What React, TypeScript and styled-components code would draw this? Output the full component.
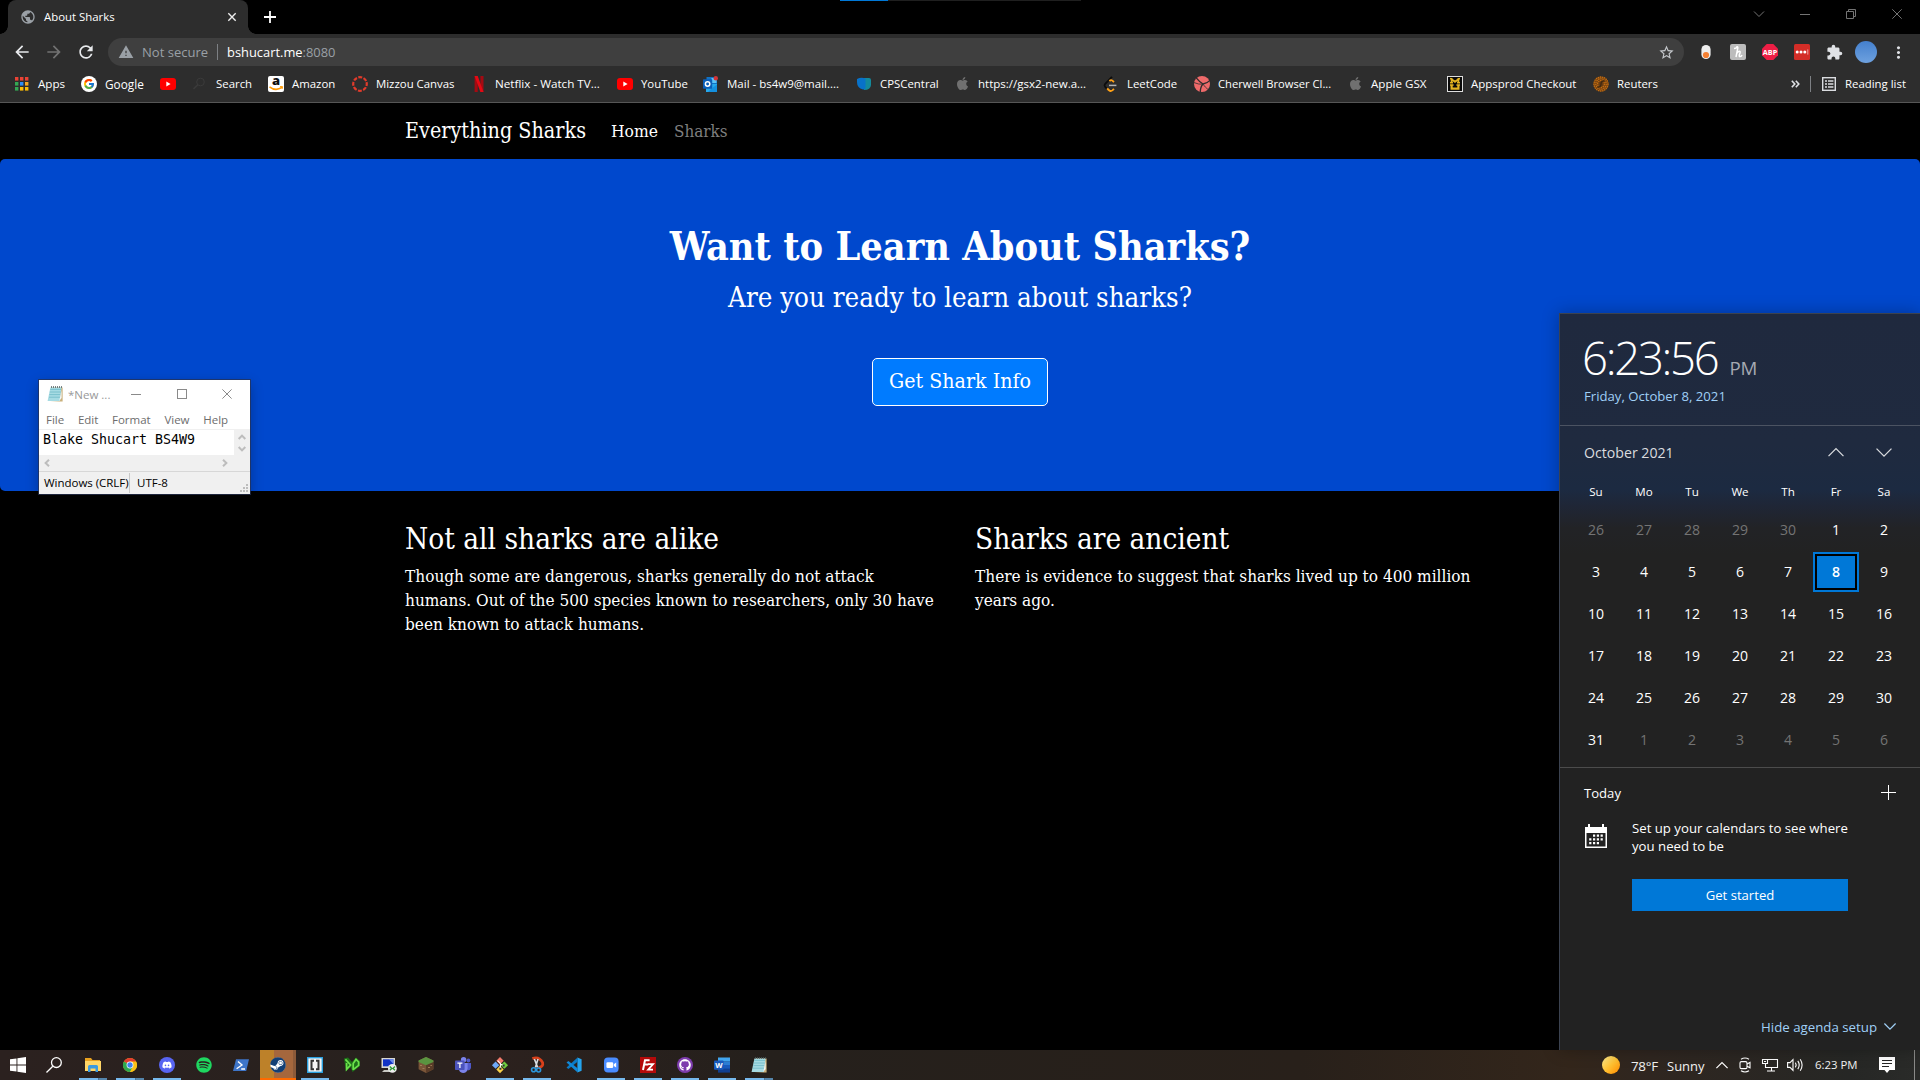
import React from "react";
import styled, { createGlobalStyle, css } from "styled-components";
import { FcGoogle } from "react-icons/fc";
import { FaApple, FaDiscord, FaSpotify, FaSteam, FaGithub } from "react-icons/fa";
import { MdExtension, MdStarBorder, MdArrowBack, MdArrowForward, MdRefresh, MdWarning, MdPublic, MdMoreVert } from "react-icons/md";

const SANS = `"Open Sans", "Noto Sans", sans-serif`;
const SERIF = `"DejaVu Serif Condensed", "DejaVu Serif", serif`;

const GlobalStyle = createGlobalStyle`
  *, *::before, *::after { box-sizing: border-box; }
  body { margin: 0; background: #000; overflow: hidden; }
  svg { display: block; flex: none; overflow: visible; }
  h1, h2, p { margin: 0; }
`;

const Screen = styled.div`
  position: relative;
  display: flex;
  flex-direction: column;
  width: 1920px;
  height: 1080px;
  overflow: hidden;
  background: #000;
  color: #fff;
  font-family: ${SANS};
`;

/* ---------- browser chrome ---------- */

const TabStrip = styled.div`
  display: flex;
  height: 34px;
  padding-left: 8px;
`;

const Tab = styled.div`
  position: relative;
  display: flex;
  align-items: center;
  width: 240px;
  padding: 0 12px 1px 12px;
  border-radius: 8px 8px 0 0;
  background: #2d2d2d;
  font-size: 11.4px;

  &::before,
  &::after {
    content: "";
    position: absolute;
    bottom: 0;
    width: 8px;
    height: 8px;
  }
  &::before {
    left: -8px;
    background: radial-gradient(circle at 0 0, transparent 7.5px, #2d2d2d 8px);
  }
  &::after {
    right: -8px;
    background: radial-gradient(circle at 100% 0, transparent 7.5px, #2d2d2d 8px);
  }
`;

const TabTitle = styled.span`
  flex: 1;
  margin-left: 8px;
`;

const NewTab = styled.div`
  display: flex;
  align-items: center;
  padding-left: 16px;
`;

const WindowButtons = styled.div`
  display: flex;
  gap: 30px;
  align-items: center;
  height: 28px;
  margin-left: auto;
  padding-right: 15px;
`;

const LoadingTrack = styled.div`
  position: absolute;
  top: 0;
  left: 840px;
  width: 241px;
  height: 1px;
  background: linear-gradient(90deg, #0078d7 48px, #1f1f1f 48px);
`;

const Toolbar = styled.div`
  display: flex;
  align-items: center;
  height: 36px;
  padding: 0 12px 0 12px;
  background: #2d2d2d;
`;

const NavButtons = styled.div`
  display: flex;
  gap: 12px;
  width: 96px;
  color: #e8eaed;
`;

const Omnibox = styled.div`
  display: flex;
  align-items: center;
  width: 1576px;
  height: 28px;
  padding: 0 9px 0 10px;
  border-radius: 14px;
  background: #3f3f3f;
  color: #9aa0a6;
  font-size: 13.05px;
`;

const Security = styled.span`
  width: 75px;
  margin-left: 8px;
`;

const Address = styled.span`
  flex: 1;
  margin-left: 9px;
  font-size: 12.9px;

  b {
    color: #fff;
    font-weight: 400;
  }
`;

const Divider = styled.span`
  width: 1px;
  height: 16px;
  background: #7d8084;
`;

const Extensions = styled.div`
  display: flex;
  flex: 1;
  align-items: center;
  justify-content: space-between;
  padding-left: 14px;
`;

const Avatar = styled.div`
  width: 22px;
  height: 22px;
  margin: 0 -4px;
  border-radius: 50%;
  background: linear-gradient(#4480ce, #6ea1df);
`;

const Bookmarks = styled.div`
  display: flex;
  align-items: center;
  height: 33px;
  padding: 0 14px 5px;
  border-bottom: 1px solid #565656;
  background: #2d2d2d;
  font-size: 11.4px;
`;

const Bookmark = styled.div<{ $w: number }>`
  display: flex;
  flex: none;
  gap: 8px;
  align-items: center;
  width: ${(p) => p.$w}px;
  white-space: nowrap;
`;

const BookmarkLabel = styled.span<{ $size?: number }>`
  font-size: ${(p) => p.$size ?? 11.4}px;
`;

const BookmarksEnd = styled.div`
  display: flex;
  align-items: center;
  gap: 9px;
  margin-left: auto;
`;

const OverflowMark = styled.svg`
  margin-right: 1px;
`;

const ReadingGlyph = styled.svg`
  margin-left: 2px;
`;

/* ---------- page ---------- */

const Page = styled.main`
  flex: 1;
  font-family: ${SERIF};
`;

const Container = styled.div`
  width: 1140px;
  margin: 0 auto;
  padding: 0 15px;
`;

const PageNav = styled(Container)`
  display: flex;
  align-items: center;
  height: 56px;
  padding-bottom: 2px;
`;

const Brand = styled.span`
  width: 206px;
  font-size: 21.36px;
`;

const NavLink = styled.span<{ $active?: boolean }>`
  margin-right: 16px;
  padding-top: 1px;
  color: ${(p) => (p.$active ? "#fff" : "#7f7f7f")};
  font-size: ${(p) => (p.$active ? 17.33 : 16.9)}px;
`;

const Jumbotron = styled.section`
  display: flex;
  flex-direction: column;
  align-items: center;
  height: 332px;
  padding-top: 63px;
  border-radius: 5px;
  background: #0048cd;
`;

const Headline = styled.h1`
  margin-bottom: 8px;
  font-size: 39.3px;
  line-height: 48px;
`;

const Tagline = styled.p`
  margin-bottom: 41px;
  font-size: 27.46px;
  line-height: 39px;
`;

const PrimaryButton = styled.button`
  width: 176px;
  height: 48px;
  padding: 0 0 4px;
  border: 1px solid #fff;
  border-radius: 5px;
  background: #007bff;
  color: #fff;
  font: 21.19px ${SERIF};
`;

const Columns = styled(Container)`
  display: grid;
  grid-template-columns: 540px 540px;
  column-gap: 30px;
  padding-top: 30px;
`;

const ColumnTitle = styled.h2`
  margin-bottom: 7px;
  font-weight: 400;
  font-size: 29.5px;
  line-height: 36px;
`;

const Paragraph = styled.p`
  font-size: 17.08px;
  line-height: 24px;
`;

/* ---------- notepad window ---------- */

const Notepad = styled.div`
  position: absolute;
  top: 380px;
  left: 39px;
  display: flex;
  flex-direction: column;
  width: 211px;
  height: 114px;
  background: #f0f0f0;
  color: #000;
  box-shadow: 0 0 0 1px rgba(40, 50, 80, 0.75), 0 4px 12px rgba(0, 0, 0, 0.3);
`;

const NotepadTitle = styled.div`
  display: flex;
  align-items: center;
  height: 30px;
  padding: 0 18px 2px 8px;
  background: #fff;
  color: #999;
  font-size: 11.5px;
`;

const NotepadName = styled.span`
  width: 63px;
  margin-left: 5px;
`;

const NotepadControls = styled.div`
  display: flex;
  flex: 1;
  justify-content: space-between;
`;

const NotepadMenu = styled.div`
  display: flex;
  gap: 13.7px;
  align-items: center;
  height: 19px;
  padding: 0 0 1px 7px;
  background: #fff;
  color: #6d6d6d;
  font-size: 11.5px;
`;

const NotepadEditor = styled.div`
  display: flex;
  height: 26px;
`;

const NotepadText = styled.div`
  width: 195px;
  margin-top: 1px;
  padding: 1px 0 0 4px;
  background: #fff;
  font: 13.29px/18px "DejaVu Sans Mono", "Liberation Mono", monospace;
  white-space: nowrap;
`;

const VerticalScroll = styled.div`
  display: flex;
  flex: 1;
  flex-direction: column;
  gap: 6px;
  align-items: center;
  padding-top: 5px;
`;

const HorizontalScroll = styled.div`
  display: flex;
  align-items: center;
  justify-content: space-between;
  height: 16px;
  padding: 0 22px 0 5px;
`;

const StatusBar = styled.div`
  display: flex;
  flex: 1;
  align-items: center;
  padding-left: 5px;
  border-top: 1px solid #d7d7d7;
  font-size: 11.5px;
  line-height: 20px;
`;

const Encoding = styled.span`
  width: 86px;
  border-right: 1px solid #c8c8c8;
  letter-spacing: -0.03px;
  white-space: nowrap;
`;

const Charset = styled.span`
  flex: 1;
  padding-left: 7px;
`;

const Grip = styled.svg`
  align-self: flex-end;
  margin: 0 2px 2px 0;
`;

/* ---------- clock flyout ---------- */

const Flyout = styled.aside`
  position: absolute;
  top: 313px;
  right: 0;
  display: flex;
  flex-direction: column;
  width: 361px;
  height: 737px;
  border: solid #3b4250;
  border-width: 1px 0 0 1px;
  background: linear-gradient(#1f293e 0, #1f2a3f 130px, #1c2a41 176px, #1f2636 192px, #222326 214px, #222 240px);
  box-shadow: 0 0 16px rgba(0, 0, 0, 0.28);
`;

const ClockBlock = styled.div`
  height: 112px;
  padding: 15px 0 0 24px;
  border-bottom: 1px solid #4b5362;
`;

const Time = styled.div`
  display: flex;
  gap: 12px;
  align-items: baseline;
  height: 58px;
  margin-left: -2px;
  font-weight: 300;
  font-size: 45.5px;
  letter-spacing: -2.3px;
  line-height: 56px;
`;

const Meridiem = styled.span`
  color: #a5a9b2;
  font-weight: 400;
  font-size: 18.7px;
  letter-spacing: -0.3px;
  line-height: 24px;
`;

const DateLine = styled.div`
  color: #a0d0f7;
  font-size: 13.15px;
  line-height: 18px;
`;

const MonthBar = styled.div`
  display: flex;
  gap: 32px;
  align-items: center;
  height: 53px;
  padding: 0 28px 1px 24px;
  color: #dadcdf;
  font-size: 14.15px;
`;

const MonthName = styled.span`
  flex: 1;
`;

const DayGrid = styled.div`
  display: grid;
  grid-template-columns: repeat(7, 48px);
  grid-auto-rows: 42px;
  height: 259px;
  padding-left: 12px;
`;

const WeekRow = styled(DayGrid)`
  height: 29px;
  grid-auto-rows: 25px;
`;

const WeekDay = styled.span`
  display: flex;
  align-items: center;
  justify-content: center;
  font-size: 11.6px;
`;

const Day = styled.span<{ $muted?: boolean; $today?: boolean }>`
  display: flex;
  align-items: center;
  justify-content: center;
  color: ${(p) => (p.$muted ? "#747474" : "#fff")};
  font-size: 14.05px;
  ${(p) =>
    p.$today &&
    css`
      align-self: center;
      justify-self: center;
      width: 46px;
      height: 40px;
      margin-top: 2px;
      padding-bottom: 1px;
      border: 2px solid #0078d7;
      background: #0078d7;
      box-shadow: inset 0 0 0 2px #000;
      font-weight: 600;
    `}
`;

const Agenda = styled.div`
  display: flex;
  flex: 1;
  flex-direction: column;
  border-top: 1px solid #4c4c4c;
`;

const AgendaHeader = styled.div`
  display: flex;
  align-items: center;
  justify-content: space-between;
  height: 49px;
  padding: 0 24px 0 24px;
  font-size: 13.1px;
`;

const AgendaBody = styled.div`
  display: flex;
  gap: 25px;
  padding: 2px 0 0 25px;
  font-size: 13.2px;
  line-height: 18px;
`;

const AgendaColumn = styled.div`
  display: flex;
  flex-direction: column;
  gap: 24px;
  width: 216px;
`;

const GetStarted = styled.button`
  height: 32px;
  padding: 0;
  border: 0;
  background: #0078d7;
  color: #fff;
  font: 13.1px ${SANS};
`;

const HideAgenda = styled.div`
  display: flex;
  gap: 7px;
  align-items: center;
  justify-content: flex-end;
  height: 46px;
  margin-top: auto;
  padding: 0 24px 1px 0;
  color: #a0d0f7;
  font-size: 13.27px;
`;

/* ---------- taskbar ---------- */

const Taskbar = styled.footer`
  display: flex;
  height: 30px;
  background: linear-gradient(90deg, #2b211f 0, #28211e 400px, #2c211e 480px, #25201c 760px, #28201a 1300px, #33261b 1570px, #2f2620 1650px, #262725 1850px, #2a2b29);
`;

const StartArea = styled.div`
  display: flex;
  align-items: center;
  gap: 20px;
  width: 75px;
  padding-left: 10px;
`;

const TaskItem = styled.div<{ $state?: "open" | "stack" | "alert" }>`
  position: relative;
  display: flex;
  align-items: center;
  justify-content: center;
  width: 36px;
  margin-right: 1px;

  ${(p) =>
    p.$state === "alert" &&
    css`
      background: linear-gradient(90deg, #bd8129 14px, #a5673d 14px, #a5673d 33px, #8c5a39 33px);
    `}

  &::after {
    content: "";
    position: absolute;
    right: ${(p) => (p.$state === "alert" ? 0 : 4)}px;
    bottom: 0;
    left: ${(p) => (p.$state === "alert" ? 0 : 4)}px;
    height: 2px;
    background: ${(p) =>
      p.$state === "alert"
        ? "#ff6a00"
        : p.$state === "stack"
          ? "linear-gradient(90deg, #76b9ed 19px, #40607a 19px, #5585ab 20px)"
          : p.$state === "open"
            ? "#76b9ed"
            : "transparent"};
  }
`;

const Tray = styled.div`
  display: flex;
  align-items: center;
  width: 318px;
  margin-left: auto;
  color: #f2f2f2;
  font-size: 13px;
`;

const Sun = styled.span`
  width: 18px;
  height: 18px;
  margin-right: 11px;
  border-radius: 50%;
  background: linear-gradient(135deg, #ffe680 10%, #ffc233 50%, #ff8c00 95%);
`;

const Temperature = styled.span`
  width: 36px;
  padding-top: 1px;
  font-size: 13.4px;
  letter-spacing: -0.3px;
`;

const Weather = styled.span`
  width: 49px;
  padding-top: 1px;
`;

const TrayIcons = styled.div`
  display: flex;
  align-items: center;
  gap: 9px;
  width: 99px;
`;

const TrayClock = styled.span`
  width: 63px;
  padding-bottom: 1px;
  font-size: 11.37px;
`;

const TrayActions = styled.svg`
  margin-left: 1px;
`;

const ShowDesktop = styled.span`
  width: 1px;
  height: 30px;
  margin-left: 19px;
  background: #8a8a88;
`;

/* ---------- shared line icons ---------- */

const LINES: Record<string, string> = {
  up: "M0.5 7.5 L7.5 0.5 L14.5 7.5",
  down: "M0.5 0.5 L7.5 7.5 L14.5 0.5",
};

const Chevron = ({ dir, w = 16, color = "currentColor" }: { dir: "up" | "down"; w?: number; color?: string }) => (
  <svg width={w} height={w * 0.55} viewBox="0 0 15 8" fill="none" stroke={color} strokeWidth={w < 13 ? 1.5 : 1.2}>
    <path d={LINES[dir]} />
  </svg>
);

const ScrollArrow = ({ d, w, h }: { d: string; w: number; h: number }) => (
  <svg width={w} height={h} viewBox={`0 0 ${w} ${h}`} fill="none" stroke="#bdbdbd" strokeWidth="2">
    <path d={d} />
  </svg>
);

const Cross = ({ s, color, width = 1 }: { s: number; color: string; width?: number }) => (
  <svg width={s} height={s} viewBox="0 0 10 10" stroke={color} strokeWidth={width}>
    <path d="M0.4 0.4 L9.6 9.6 M9.6 0.4 L0.4 9.6" />
  </svg>
);

const Svg16 = ({ children }: { children: React.ReactNode }) => (
  <svg width="16" height="16" viewBox="0 0 16 16">
    {children}
  </svg>
);

/* ---------- bookmark icons ---------- */

const AppsIcon = () => {
  const colors = ["#ea4335", "#ea4335", "#ea4335", "#34a853", "#2f8df5", "#f6a623", "#34a853", "#fbbc05", "#fbbc05"];
  return (
    <Svg16>
      {colors.map((c, i) => (
        <rect key={i} x={1 + (i % 3) * 5} y={1 + Math.floor(i / 3) * 5} width="3.4" height="3.6" fill={c} />
      ))}
    </Svg16>
  );
};

const GoogleIcon = () => (
  <svg width="16" height="16" viewBox="0 0 16 16">
    <circle cx="8" cy="8" r="8" fill="#fff" />
    <FcGoogle x="2" y="2" size={12} />
  </svg>
);

const YouTubeIcon = () => (
  <Svg16>
    <rect x="0" y="2" width="16" height="12" rx="3" fill="#f00" />
    <path d="M6.3 5.4 L10.6 8 L6.3 10.6Z" fill="#fff" />
  </Svg16>
);

const SearchFavicon = () => (
  <Svg16>
    <g fill="none" stroke="#3b3b3b" strokeWidth="1">
      <circle cx="8.5" cy="6" r="3.8" />
      <path d="M5.8 8.8 L1.5 13" strokeWidth="1.6" />
    </g>
  </Svg16>
);

const AmazonIcon = () => (
  <Svg16>
    <rect width="16" height="16" rx="2" fill="#fff" />
    <text x="8" y="9.4" textAnchor="middle" fontFamily="Open Sans" fontWeight="800" fontSize="13" fill="#111">a</text>
    <path d="M1.5 10.8 Q7.5 15.6 14 11.4" fill="none" stroke="#f90" strokeWidth="1.5" />
    <path d="M12 10.6 H14.6 L14 13" fill="none" stroke="#f90" />
  </Svg16>
);

const CanvasIcon = () => (
  <Svg16>
    <circle cx="8" cy="8" r="6.8" fill="none" stroke="#e13b2b" strokeWidth="2.2" strokeDasharray="3.9 1.44" transform="rotate(-16 8 8)" />
  </Svg16>
);

const NetflixIcon = () => (
  <Svg16>
    <path d="M3.6 0H6.7V16H3.6Z M9.4 0H12.5V16H9.4Z" fill="#a50a12" />
    <path d="M3.6 0H6.7L12.5 16H9.4Z" fill="#e50914" />
  </Svg16>
);

const OutlookIcon = () => (
  <Svg16>
    <rect x="3.5" y="1" width="10.5" height="10" fill="#1272c4" />
    <rect x="8.5" y="2" width="5" height="5" fill="#5bc3f7" />
    <path d="M3 8 H14 V16 H3Z" fill="#28a8ea" />
    <path d="M8 13 L14 8.5 V16 H5Z" fill="#1490df" />
    <rect y="3.3" width="9.2" height="9.4" rx="0.6" fill="#0a5eb8" />
    <circle cx="4.6" cy="8" r="2.2" fill="none" stroke="#fff" strokeWidth="1.5" />
    <circle cx="12.8" cy="2.2" r="2.2" fill="#d13438" />
  </Svg16>
);

const ShieldIcon = () => (
  <Svg16>
    <path d="M8 2 H13 Q15 2 15 4 V9 Q14.6 14 8 14Z" fill="#138a9c" />
    <path d="M1 3 Q5 0.8 9.5 2.5 V12 Q8.6 13.8 7 13.6 Q1 12 1 6Z" fill="#0872c9" />
  </Svg16>
);

const LeetCodeIcon = () => (
  <Svg16>
    <g fill="none" strokeWidth="1.8">
      <path d="M9 0.8 L2 8 Q1 9.2 2 10.6 L4 12.8" stroke="#0c0c0c" />
      <path d="M6.4 5 Q8 3.4 9.4 4.6 L11 6.2 M4.2 12.4 Q7 16.2 9.4 14.4 L11 12.8" stroke="#ffa116" />
      <path d="M6 9.4 H13.4" stroke="#b3b3b3" strokeWidth="1.5" />
    </g>
  </Svg16>
);

const CherwellIcon = () => (
  <Svg16>
    <circle cx="8" cy="8" r="8" fill="#ee6a6a" />
    <g fill="none" stroke="#2d2d2d" strokeWidth="1.3">
      <path d="M2 1.6 Q5.4 5.8 9 8 Q13.4 7.2 16 4.4 M9 8 Q6.2 11 6.3 16.4" />
      <path d="M0 6.6 Q5 8.6 8.5 8.2 M8.8 8 Q11.4 11.5 14 13.5" strokeWidth="0.8" />
    </g>
  </Svg16>
);

const MizzouIcon = () => (
  <Svg16>
    <rect x="0.5" y="0.5" width="15" height="15" fill="#0a0a0a" stroke="#ddd" />
    <g fill="none" stroke="#e3b321">
      <path d="M4.6 7 V3.2 L8 5.8 L11.4 3.2 V7" strokeWidth="1.8" />
      <path d="M3 2.8H5.4M10.6 2.8H13M3 6.8H6M10 6.8H13" strokeWidth="1.4" />
      <path d="M4.6 9 V12.6 H11.4 V9" strokeWidth="2.2" />
      <path d="M3 9H6.6M9.4 9H13" strokeWidth="1.4" />
    </g>
  </Svg16>
);

const ReutersIcon = () => (
  <Svg16>
    <circle cx="8" cy="8" r="7.6" fill="#6b3d12" />
    {[7, 5.2, 3.4].map((r) => (
      <circle key={r} cx="8" cy="8" r={r} fill="none" stroke="#c46e12" strokeWidth="1.3" strokeDasharray="1.4 0.7" />
    ))}
    <path d="M4.4 11 Q8 11.4 8 8 T11.8 4.8" fill="none" stroke="#3d2812" strokeWidth="1.3" />
  </Svg16>
);

const AppleIcon = () => <FaApple size={15} color="#707070" />;

const BOOKMARKS: [string, number, React.ReactNode, number?][] = [
  ["Apps", 67, <AppsIcon />, 11.6],
  ["Google", 79, <GoogleIcon />, 11.8],
  ["", 32, <YouTubeIcon />],
  ["Search", 76, <SearchFavicon />],
  ["Amazon", 84, <AmazonIcon />],
  ["Mizzou Canvas", 119, <CanvasIcon />],
  ["Netflix - Watch TV...", 146, <NetflixIcon />, 11.67],
  ["YouTube", 86, <YouTubeIcon />],
  ["Mail - bs4w9@mail....", 153, <OutlookIcon />, 11.5],
  ["CPSCentral", 99, <ShieldIcon />],
  ["https://gsx2-new.a...", 148, <AppleIcon />, 11.5],
  ["LeetCode", 91, <LeetCodeIcon />],
  ["Cherwell Browser Cl...", 154, <CherwellIcon />, 11.2],
  ["Apple GSX", 99, <AppleIcon />, 11.6],
  ["Appsprod Checkout", 146, <MizzouIcon />, 11.46],
  ["Reuters", 70, <ReutersIcon />],
];

/* ---------- extension icons ---------- */

const CapsuleIcon = () => (
  <Svg16>
    <rect x="3.4" y="1" width="9.2" height="14" rx="4.6" fill="#eee" />
    <circle cx="8" cy="11" r="3.1" fill="#f58033" />
  </Svg16>
);

const HoneyIcon = () => (
  <Svg16>
    <rect width="16" height="16" rx="2" fill="#bcbcbc" />
    <path d="M4 4.6 Q6.5 4.6 7 2.8 Q8.2 2.6 7.6 5 L6 13 M6.6 9.6 Q8.6 6.6 9.8 7.4 Q10.6 8 9.4 10.6 Q8.8 12.8 10.2 12.6 Q11.4 12.4 12 11" fill="none" stroke="#fff" strokeWidth="1.5" />
  </Svg16>
);

const AdblockIcon = () => (
  <Svg16>
    <path d="M4.7 0H11.3L16 4.7V11.3L11.3 16H4.7L0 11.3V4.7Z" fill="#ed1e45" />
    <text x="8" y="10.8" textAnchor="middle" fontFamily="Open Sans" fontWeight="700" fontSize="7.8" fill="#fff" textLength="14.4" lengthAdjust="spacingAndGlyphs">ABP</text>
  </Svg16>
);

const LastPassIcon = () => (
  <Svg16>
    <rect width="16" height="16" rx="1.5" fill="#d32d27" />
    <circle cx="3.2" cy="8" r="1.5" fill="#fff" />
    <circle cx="7" cy="8" r="1.5" fill="#fff" />
    <circle cx="10.8" cy="8" r="1.5" fill="#fff" />
    <path d="M13.8 5.4V10.6" stroke="#f2a19e" />
  </Svg16>
);

/* ---------- taskbar icons ---------- */

const FolderIcon = () => (
  <Svg16>
    <path d="M0 1H6L7.5 3H15V8H0Z" fill="#e9a21f" />
    <rect y="4" width="16" height="10" fill="#ffd667" />
    <path d="M3 15V9.5Q3 8 4.5 8H11.5Q13 8 13 9.5V15H10.5V11.5H5.5V15Z" fill="#3b9ae0" />
  </Svg16>
);

const ChromeIcon = () => (
  <Svg16>
    <circle cx="8" cy="8" r="7" fill="#fbc116" />
    <path d="M8 8 L1.9 4.5 A7 7 0 0 1 14.1 4.5Z" fill="#e33b2e" />
    <path d="M8 8 L1.9 4.5 A7 7 0 0 0 8 15 L11 9.7Z" fill="#2da94f" />
    <path d="M8 4.5 H14.1 A7 7 0 0 1 8 15 L11 9.5Z" fill="#fbc116" />
    <circle cx="8" cy="8" r="3.4" fill="#fff" />
    <circle cx="8" cy="8" r="2.7" fill="#3f83ee" />
  </Svg16>
);

const DiscordIcon = () => (
  <svg width="16" height="16" viewBox="0 0 16 16">
    <circle cx="8" cy="8" r="8" fill="#5865f2" />
    <FaDiscord x="3" y="3" size={10} color="#fff" />
  </svg>
);

const PowerShellIcon = () => (
  <Svg16>
    <path d="M3 2.2H16L13.2 14H0Z" fill="#3e75c8" />
    <path d="M5 4.4 L9 8 L3.6 11.8 M8.2 12H12" fill="none" stroke="#fff" strokeWidth="1.4" />
  </Svg16>
);

const SteamIcon = () => (
  <svg width="16" height="16" viewBox="0 0 16 16">
    <circle cx="8" cy="8" r="7.6" fill="#fff" />
    <FaSteam size={16} color="#123f75" />
  </svg>
);

const BracketsIcon = () => (
  <Svg16>
    <rect width="16" height="16" fill="#2aa0df" />
    <rect x="1.4" y="1.4" width="13.2" height="13.2" fill="#f5f5f5" />
    <path d="M7 3.8H4.5V12.2H7M9 3.8H11.5V12.2H9" fill="none" stroke="#333" strokeWidth="2" />
  </Svg16>
);

const GreenArrowIcon = () => (
  <Svg16>
    <path d="M0 1.4 L4 0.6 L8 5 L12 0.4 L16 4 V9 L8.6 15 L6.4 10 L2 14.6 Z" fill="#1d6f19" />
    <g fill="none" stroke="#6be04b" strokeWidth="1.7">
      <path d="M1.4 2.4 L6.6 8 L2.6 12.4 V6" />
      <path d="M9.2 13 V6.4 L12 2.4 L14.6 5 V8.4 L9.2 12.6" />
    </g>
  </Svg16>
);

const RemotePcIcon = () => (
  <Svg16>
    <rect x="0.5" y="1" width="13.5" height="10" fill="#d7d7d2" />
    <rect x="2" y="2.3" width="10.4" height="7" fill="#1233c4" />
    <path d="M8 2.3H12.4V7Z" fill="#6d8cf0" />
    <path d="M3 13H10V15H1Z" fill="#c7c7c2" />
    <circle cx="11.4" cy="11.4" r="4.4" fill="#eee" />
    <path d="M8.8 9.6L10.8 11.4L8.8 13.2M14 9.6L12 11.4L14 13.2" fill="none" stroke="#2f9a37" strokeWidth="1.4" />
  </Svg16>
);

const MinecraftIcon = () => (
  <Svg16>
    <path d="M8 0 L15.4 3.4 V12.2 L8 16 L0.6 12.2 V3.4Z" fill="#7a5538" />
    <path d="M8 7 L15.4 3.4 V12.2 L8 16Z" fill="#5a3c28" />
    <path d="M8 0 L15.4 3.4 V5 L8 8.2 L0.6 5 V3.4Z" fill="#5a9440" />
    <path d="M2 8h2v1h-2zM4.5 11h2v1h-2zM10 10h2v1h-2zM12.4 8h1.5v1h-1.5z" fill="#a07c58" />
  </Svg16>
);

const TeamsIcon = () => (
  <Svg16>
    <circle cx="8.6" cy="2.8" r="2.7" fill="#7b83eb" />
    <circle cx="13.4" cy="3.5" r="1.9" fill="#5059c9" />
    <path d="M10 6H16V11Q15.6 13.6 12.5 13.4Z" fill="#5059c9" />
    <path d="M4 6H12.6V12Q12 16 8 16Q4 15.6 4 12Z" fill="#7b83eb" />
    <rect y="3.6" width="9.6" height="9.4" rx="0.8" fill="#4b53bc" />
    <path d="M2.4 6.2H7.4M4.9 6.2V11" fill="none" stroke="#fff" strokeWidth="1.3" />
  </Svg16>
);

const GitIcon = () => (
  <Svg16>
    <g transform="rotate(45 8 8)">
      <rect x="2.4" y="2.4" width="5.2" height="5.2" fill="#f47b6c" />
      <rect x="8.6" y="2.4" width="5.2" height="5.2" fill="#6fce3f" />
      <rect x="2.4" y="8.6" width="5.2" height="5.2" fill="#6fa9f7" />
      <rect x="8.6" y="8.6" width="5.2" height="5.2" fill="#f9d24a" />
    </g>
    <path d="M5.6 3.6L8.4 6.4V12M8.4 7L11.6 8.6" fill="none" stroke="#fff" strokeWidth="1.1" />
    <path d="M7.4 10.8h2v2h-2zM10.6 7.4h2v2h-2z" fill="#333" />
  </Svg16>
);

const SnipIcon = () => (
  <Svg16>
    <path d="M3.4 1.6 Q10 -1 13.6 5.6 Q14.6 9.6 9.6 10.6" fill="none" stroke="#d8401b" strokeWidth="2.8" />
    <path d="M5.4 2 L8.6 10.4 M9 2 L6.4 10.4" stroke="#d8dde2" strokeWidth="1.6" />
    <circle cx="4.6" cy="12.8" r="2" fill="none" stroke="#2b96dc" strokeWidth="1.6" />
    <circle cx="9.6" cy="13" r="2" fill="none" stroke="#2b96dc" strokeWidth="1.6" />
  </Svg16>
);

const VsCodeIcon = () => (
  <Svg16>
    <path d="M11.4 0.4 L15.6 2.2 V13.8 L11.4 15.6Z" fill="#24a4ee" />
    <path d="M11.6 0.4 V4.8 L2.4 11.9 L0.5 10.4Z" fill="#0b7ac6" />
    <path d="M11.6 15.6 V11.2 L2.4 4.1 L0.5 5.6Z" fill="#1088d8" />
  </Svg16>
);

const ZoomIcon = () => (
  <Svg16>
    <rect x="1" y="0.6" width="14.6" height="14.8" rx="4" fill="#4a8cff" />
    <rect x="3.4" y="5.3" width="6.8" height="5.6" rx="1.2" fill="#fff" />
    <path d="M10.8 7.2L13.2 5.6V10.6L10.8 9Z" fill="#fff" />
  </Svg16>
);

const FileZillaIcon = () => (
  <Svg16>
    <rect width="16" height="16" fill="#b40a0a" />
    <path d="M3 13L5 3.2H9.6M4.2 7.6H8.4" fill="none" stroke="#fff" strokeWidth="2" />
    <path d="M8 7.2H13L8.2 12.6H13" fill="none" stroke="#fff" strokeWidth="1.8" />
  </Svg16>
);

const GitHubDesktopIcon = () => (
  <svg width="16" height="16" viewBox="0 0 16 16">
    <circle cx="8" cy="8" r="8" fill="#7d3cad" />
    <FaGithub x="2" y="2" size={12} color="#fff" />
    <path d="M5 5 Q8 3.6 11 5 Q12.4 8 10.2 10 H5.8 Q3.6 8 5 5Z" fill="#7d3cad" />
  </svg>
);

const WordIcon = () => (
  <Svg16>
    <rect x="4" y="0.5" width="12" height="4" fill="#41a5ee" />
    <rect x="4" y="4.3" width="12" height="4" fill="#2b7cd3" />
    <rect x="4" y="8" width="12" height="4" fill="#185abd" />
    <rect x="4" y="11.6" width="12" height="4" fill="#103f91" />
    <rect y="3.4" width="9.6" height="9.4" rx="0.8" fill="#185abd" />
    <text x="4.8" y="10.9" textAnchor="middle" fontFamily="Open Sans" fontWeight="700" fontSize="7.6" fill="#fff">W</text>
  </Svg16>
);

const NotepadIcon = () => (
  <Svg16>
    <path d="M4 1.4H15.6V15.6H12.5L3 15Z" fill="#c9b07b" />
    <path d="M3.4 1.4H14.6L12.8 15H0.6Z" fill="#a6dbe3" />
    <path d="M3.2 3.4H14M2.8 6H13.8M2.4 8.6H13.4M2 11.2H13" stroke="#6fb9c7" strokeWidth="0.8" />
    <path d="M12.2 15L14.6 4V12Z" fill="#f2f6f6" />
    <path d="M4 1H15" stroke="#4c5c60" strokeWidth="1.6" strokeDasharray="1 1" />
  </Svg16>
);

const TASKS: [React.ReactNode, ("open" | "stack" | "alert")?][] = [
  [<FolderIcon />, "stack"],
  [<ChromeIcon />, "stack"],
  [<DiscordIcon />, "open"],
  [<FaSpotify size={16} color="#1ed760" />],
  [<PowerShellIcon />],
  [<SteamIcon />, "alert"],
  [<BracketsIcon />, "open"],
  [<GreenArrowIcon />],
  [<RemotePcIcon />],
  [<MinecraftIcon />],
  [<TeamsIcon />],
  [<GitIcon />, "open"],
  [<SnipIcon />, "open"],
  [<VsCodeIcon />],
  [<ZoomIcon />, "open"],
  [<FileZillaIcon />, "open"],
  [<GitHubDesktopIcon />, "open"],
  [<WordIcon />, "open"],
  [<NotepadIcon />, "stack"],
];

const WEEKDAYS = ["Su", "Mo", "Tu", "We", "Th", "Fr", "Sa"];
const DAYS = Array.from({ length: 42 }, (_, i) => {
  if (i < 5) return { n: 26 + i, muted: true };
  if (i < 36) return { n: i - 4, muted: false };
  return { n: i - 35, muted: true };
});

const BrowserChrome = () => (
  <header>
    <TabStrip>
      <Tab>
        <MdPublic size={16} color="#9aa0a6" />
        <TabTitle>About Sharks</TabTitle>
        <Cross s={8} color="#eee" width={1.7} />
      </Tab>
      <NewTab>
        <svg width="12" height="12" viewBox="0 0 12 12" stroke="#fff" strokeWidth="1.8">
          <path d="M6 0V12M0 6H12" />
        </svg>
      </NewTab>
      <WindowButtons>
        <svg width="16" height="10" viewBox="0 0 16 10" fill="none" stroke="#747474">
          <path d="M3 2.5L8 7.5L13 2.5" />
        </svg>
        <svg width="16" height="10" viewBox="0 0 16 10" stroke="#747474">
          <path d="M3 5.5H13" />
        </svg>
        <svg width="16" height="10" viewBox="0 0 16 10" fill="none" stroke="#747474">
          <path d="M3.5 2.5H10.5V9.5H3.5Z M5.5 2.5V0.5H12.5V7.5H10.5" />
        </svg>
        <svg width="16" height="10" viewBox="0 0 16 10" stroke="#747474">
          <path d="M3.3 0.3L12.7 9.7M12.7 0.3L3.3 9.7" />
        </svg>
      </WindowButtons>
    </TabStrip>
    <LoadingTrack />
    <Toolbar>
      <NavButtons>
        <MdArrowBack size={20} />
        <MdArrowForward size={20} color="#727272" />
        <MdRefresh size={20} />
      </NavButtons>
      <Omnibox>
        <MdWarning size={16} color="#9aa0a6" />
        <Security>Not secure</Security>
        <Divider />
        <Address>
          <b>bshucart.me</b>:8080
        </Address>
        <MdStarBorder size={17} color="#c4c7cb" />
      </Omnibox>
      <Extensions>
        <CapsuleIcon />
        <HoneyIcon />
        <AdblockIcon />
        <LastPassIcon />
        <MdExtension size={17} color="#dfe1e5" />
        <Avatar />
        <MdMoreVert size={19} color="#dfe1e5" />
      </Extensions>
    </Toolbar>
    <Bookmarks>
      {BOOKMARKS.map(([label, w, icon, size], i) => (
        <Bookmark key={i} $w={w}>
          {icon}
          {label && <BookmarkLabel $size={size}>{label}</BookmarkLabel>}
        </Bookmark>
      ))}
      <BookmarksEnd>
        <OverflowMark width="9" height="8" viewBox="0 0 9 8" fill="none" stroke="#dfe1e5" strokeWidth="1.6">
          <path d="M0.8 0.8L3.8 4L0.8 7.2M4.8 0.8L7.8 4L4.8 7.2" />
        </OverflowMark>
        <Divider />
        <ReadingGlyph width="14" height="14" viewBox="0 0 14 14" fill="none" stroke="#dadce0" strokeWidth="1.4">
          <rect x="0.7" y="0.7" width="12.6" height="12.6" />
          <path d="M3 4H5M6 4H11.4M3 7H5M6 7H11.4M3 10H5M6 10H11.4" />
        </ReadingGlyph>
        <span>Reading list</span>
      </BookmarksEnd>
    </Bookmarks>
  </header>
);

const SharksPage = () => (
  <Page>
    <PageNav>
      <Brand>Everything Sharks</Brand>
      <NavLink $active>Home</NavLink>
      <NavLink>Sharks</NavLink>
    </PageNav>
    <Jumbotron>
      <Headline>Want to Learn About Sharks?</Headline>
      <Tagline>Are you ready to learn about sharks?</Tagline>
      <PrimaryButton>Get Shark Info</PrimaryButton>
    </Jumbotron>
    <Columns>
      <div>
        <ColumnTitle>Not all sharks are alike</ColumnTitle>
        <Paragraph>
          Though some are dangerous, sharks generally do not attack
          <br />
          humans. Out of the 500 species known to researchers, only 30 have
          <br />
          been known to attack humans.
        </Paragraph>
      </div>
      <div>
        <ColumnTitle>Sharks are ancient</ColumnTitle>
        <Paragraph>
          There is evidence to suggest that sharks lived up to 400 million
          <br />
          years ago.
        </Paragraph>
      </div>
    </Columns>
  </Page>
);

const NotepadWindow = () => (
  <Notepad>
    <NotepadTitle>
      <NotepadIcon />
      <NotepadName>*New ...</NotepadName>
      <NotepadControls>
        <svg width="10" height="10" viewBox="0 0 10 10" stroke="#8a8a8a">
          <path d="M0 5.5H10" />
        </svg>
        <svg width="10" height="10" viewBox="0 0 10 10" stroke="#8a8a8a" fill="none">
          <rect x="0.5" y="0.5" width="9" height="9" />
        </svg>
        <Cross s={10} color="#8a8a8a" />
      </NotepadControls>
    </NotepadTitle>
    <NotepadMenu>
      <span>File</span>
      <span>Edit</span>
      <span>Format</span>
      <span>View</span>
      <span>Help</span>
    </NotepadMenu>
    <NotepadEditor>
      <NotepadText>Blake Shucart BS4W9</NotepadText>
      <VerticalScroll>
        <ScrollArrow w={8} h={6} d="M0.7 5L4 1.6L7.3 5" />
        <ScrollArrow w={8} h={6} d="M0.7 1L4 4.4L7.3 1" />
      </VerticalScroll>
    </NotepadEditor>
    <HorizontalScroll>
      <ScrollArrow w={6} h={8} d="M5 0.7L1.6 4L5 7.3" />
      <ScrollArrow w={6} h={8} d="M1 0.7L4.4 4L1 7.3" />
    </HorizontalScroll>
    <StatusBar>
      <Encoding>Windows (CRLF)</Encoding>
      <Charset>UTF-8</Charset>
      <Grip width="8" height="8" viewBox="0 0 8 8" fill="#bdbdbd">
        <path d="M6 0h2v2h-2zM3 3h2v2h-2zM6 3h2v2h-2zM0 6h2v2h-2zM3 6h2v2h-2zM6 6h2v2h-2z" />
      </Grip>
    </StatusBar>
  </Notepad>
);

const ClockFlyout = () => (
  <Flyout>
    <ClockBlock>
      <Time>
        <span>6:23:56</span>
        <Meridiem>PM</Meridiem>
      </Time>
      <DateLine>Friday, October 8, 2021</DateLine>
    </ClockBlock>
    <MonthBar>
      <MonthName>October 2021</MonthName>
      <Chevron dir="up" />
      <Chevron dir="down" />
    </MonthBar>
    <WeekRow>
      {WEEKDAYS.map((d) => (
        <WeekDay key={d}>{d}</WeekDay>
      ))}
    </WeekRow>
    <DayGrid>
      {DAYS.map((d, i) => (
        <Day key={i} $muted={d.muted} $today={!d.muted && d.n === 8}>
          {d.n}
        </Day>
      ))}
    </DayGrid>
    <Agenda>
      <AgendaHeader>
        <span>Today</span>
        <svg width="15" height="15" viewBox="0 0 15 15" stroke="#fff">
          <path d="M7.5 0V15M0 7.5H15" />
        </svg>
      </AgendaHeader>
      <AgendaBody>
        <svg width="22" height="30" viewBox="0 0 22 30" fill="#fff">
          <path d="M0 8H3V5H5V8H17V5H19V8H22V29H0ZM1.5 14V27.5H20.5V14Z" fillRule="evenodd" />
          <path d="M8 15.5h2.2v2.2H8zM11.8 15.5h2.2v2.2h-2.2zM15.6 15.5h2.2v2.2h-2.2zM4.2 19.3h2.2v2.2H4.2zM8 19.3h2.2v2.2H8zM11.8 19.3h2.2v2.2h-2.2zM15.6 19.3h2.2v2.2h-2.2zM4.2 23.1h2.2v2.2H4.2zM8 23.1h2.2v2.2H8zM11.8 23.1h2.2v2.2h-2.2z" />
        </svg>
        <AgendaColumn>
          <span>
            Set up your calendars to see where
            <br />
            you need to be
          </span>
          <GetStarted>Get started</GetStarted>
        </AgendaColumn>
      </AgendaBody>
      <HideAgenda>
        Hide agenda setup
        <Chevron dir="down" w={12} />
      </HideAgenda>
    </Agenda>
  </Flyout>
);

const WindowsTaskbar = () => (
  <Taskbar>
    <StartArea>
      <svg width="16" height="16" viewBox="0 0 16 16" fill="#fff">
        <path d="M0 2.3L6.5 1.4V7.6H0ZM7.4 1.2L16 0V7.6H7.4ZM0 8.4H6.5V14.6L0 13.7ZM7.4 8.4H16V16L7.4 14.8Z" />
      </svg>
      <svg width="16" height="16" viewBox="0 0 16 16" fill="none" stroke="#fff" strokeWidth="1.3">
        <circle cx="10.4" cy="5.6" r="4.9" />
        <path d="M6.8 9.2L0.5 15.5" />
      </svg>
    </StartArea>
    {TASKS.map(([icon, state], i) => (
      <TaskItem key={i} $state={state}>
        {icon}
      </TaskItem>
    ))}
    <Tray>
      <Sun />
      <Temperature>78°F</Temperature>
      <Weather>Sunny</Weather>
      <TrayIcons>
        <Chevron dir="up" w={12} color="#fff" />
        <svg width="16" height="16" viewBox="0 0 16 16" fill="none" stroke="#fff" strokeWidth="1.1">
          <rect x="3" y="4.6" width="7" height="7" rx="1.4" />
          <path d="M10 7L13 5.4V10.8L10 9.2M4 2.2Q8 -0.2 12 2.2M4 13.8Q8 16.2 12 13.8" />
        </svg>
        <svg width="16" height="16" viewBox="0 0 16 16" fill="none" stroke="#fff" strokeWidth="1.1">
          <path d="M6 2.5H15.5V10.5H3.5V7M9.5 10.5V13.5M5 14H13M0.5 2.5H5.5V6.5H0.5ZM2 4.5H4" />
        </svg>
        <svg width="17" height="16" viewBox="0 0 17 16" fill="none" stroke="#fff" strokeWidth="1.1">
          <path d="M0.6 5.6H3L6 2.6V13.4L3 10.4H0.6ZM8.4 5.6Q10 8 8.4 10.4M10.8 3.9Q13.6 8 10.8 12.1M13.2 2.2Q17 8 13.2 13.8" />
        </svg>
      </TrayIcons>
      <TrayClock>6:23 PM</TrayClock>
      <TrayActions width="16" height="16" viewBox="0 0 16 16">
        <path d="M0 0H16V13H10.5L8 16L5.5 13H0Z" fill="#fff" />
        <path d="M3 3.5H13M3 6.5H13M3 9.5H10" stroke="#262625" strokeWidth="1.1" />
      </TrayActions>
      <ShowDesktop />
    </Tray>
  </Taskbar>
);

export default function App() {
  return (
    <Screen>
      <GlobalStyle />
      <BrowserChrome />
      <SharksPage />
      <WindowsTaskbar />
      <NotepadWindow />
      <ClockFlyout />
    </Screen>
  );
}
